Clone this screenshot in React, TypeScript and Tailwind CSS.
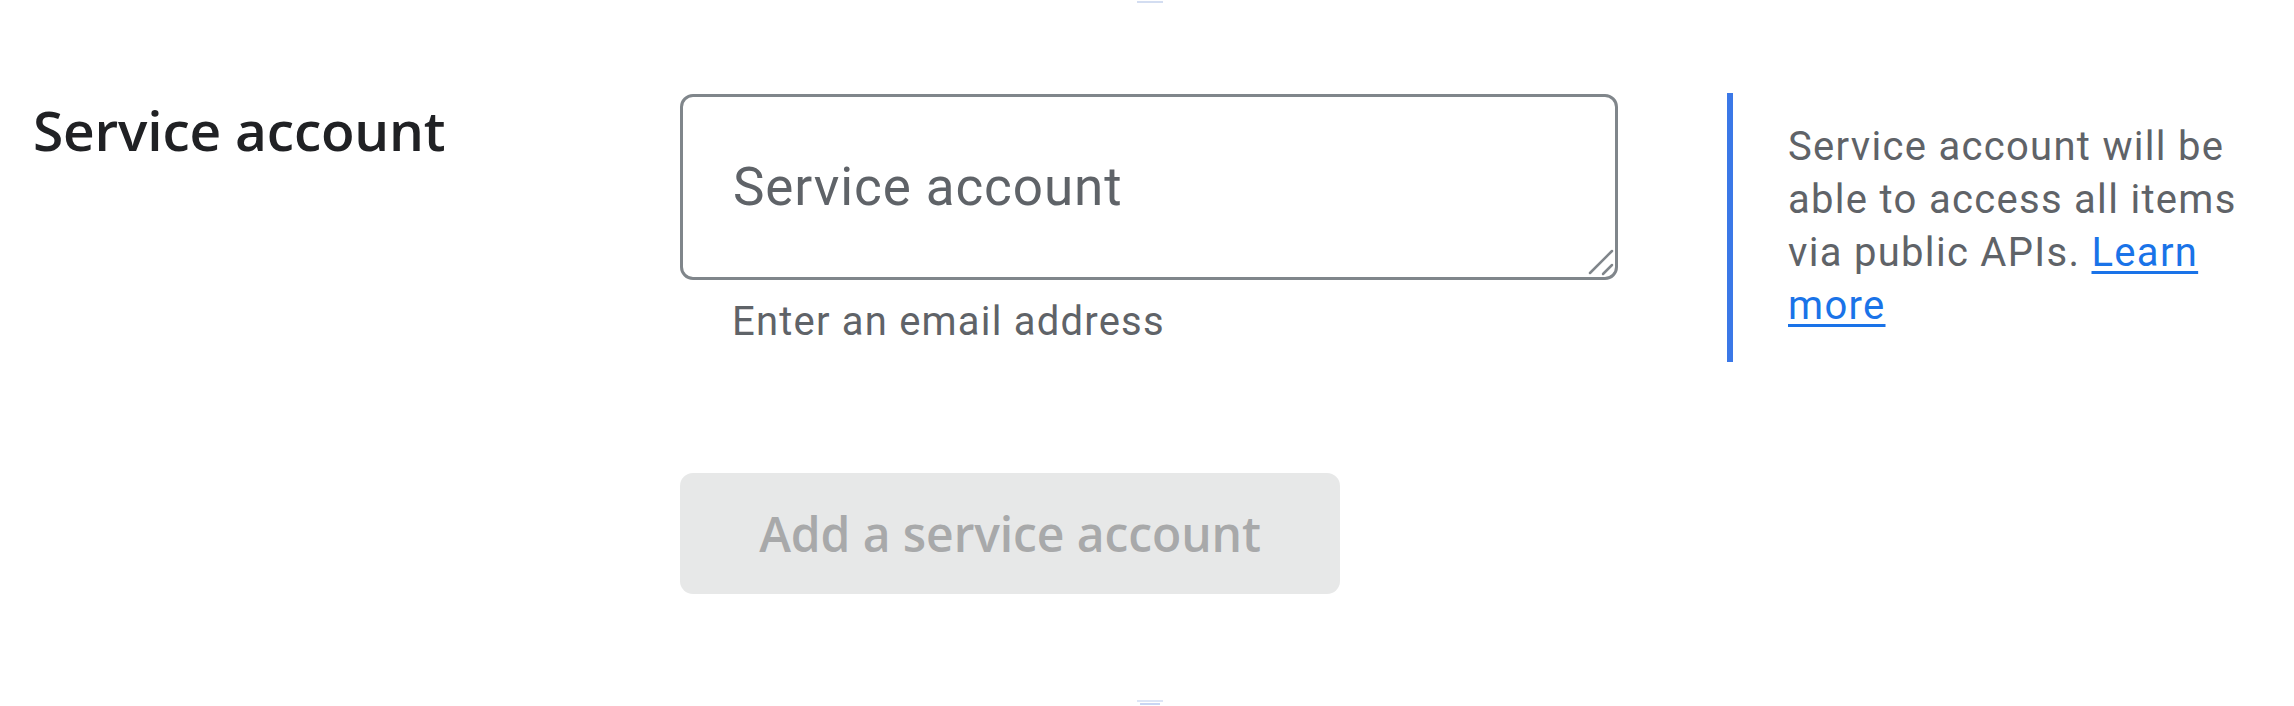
import React from "react";

const roboto = "font-['Roboto',_'Liberation_Sans',_sans-serif]";
const sans = "font-['Open_Sans',_'Liberation_Sans',_sans-serif]";

function ResizeHandle() {
	return (
		<svg
			className="absolute right-[4px] bottom-[4px] pointer-events-none"
			width="26"
			height="27"
			viewBox="0 0 26 27"
			fill="none"
			stroke="#80868b"
			strokeWidth="2.5"
			strokeLinecap="round"
		>
			<path d="M2 24 L24 2" />
			<path d="M15 25 L24 16" />
		</svg>
	);
}

export default function App() {
	return (
		<div className="w-full h-[706px] bg-white flex flex-col overflow-hidden">
			{/* faint focus marks from neighbouring rows */}
			<div className="h-[4px] flex justify-center">
				<div className="ml-[6px] mt-[1px] w-[26px] h-[2px] bg-[#d3ddf1]" />
			</div>

			<div className="flex items-start pt-[90px]">
				<div className="w-[680px] shrink-0 pl-[33px]">
					<h2 className={`${sans} text-[55px] leading-[72px] font-[560] tracking-[-0.2px] text-[#202124]`}>
						Service account
					</h2>
				</div>

				<div className="w-[938px] shrink-0 flex flex-col items-start">
					<div className="relative w-full">
						<textarea
							rows={1}
							placeholder="Service account"
							className={`${roboto} block w-full h-[186px] border-[3px] border-[#80868b] rounded-[13px] px-[50px] py-[50px] text-[53px] leading-[80px] tracking-[0.9px] text-[#202124] placeholder:text-[#5f6368] resize-none outline-none`}
						/>
						<ResizeHandle />
					</div>
					<p className={`${roboto} mt-[15px] pl-[52px] text-[40px] leading-[53px] tracking-[1.2px] text-[#5f6368]`}>
						Enter an email address
					</p>
					<button
						disabled
						className={`${sans} mt-[125px] w-[660px] h-[121px] rounded-[13px] bg-[#e7e8e8] text-[48px] font-[550] tracking-[-0.1px] text-[#a8a9aa]`}
					>
						Add a service account
					</button>
				</div>

				<div className="ml-[109px] -mt-[1px] border-l-[6px] border-[#3b78e7] pl-[55px] pt-[27px] pb-[30px]">
					<p className={`${roboto} w-[470px] text-[40px] leading-[53px] tracking-[1.3px] text-[#5f6368]`}>
						Service account will be able to access all items via public APIs.{" "}
						<a href="#" className="text-[#1a73e8] underline underline-offset-[5px] decoration-[3px]">
							Learn more
						</a>
					</p>
				</div>
			</div>

			<div className="flex-1 flex flex-col items-center justify-end pb-[1px]">
				<div className="ml-[6px] w-[26px] h-[2px] bg-[#dde5f6]" />
				<div className="ml-[6px] mt-[1px] w-[20px] h-[2px] bg-[#c9d6f3]" />
			</div>
		</div>
	);
}
